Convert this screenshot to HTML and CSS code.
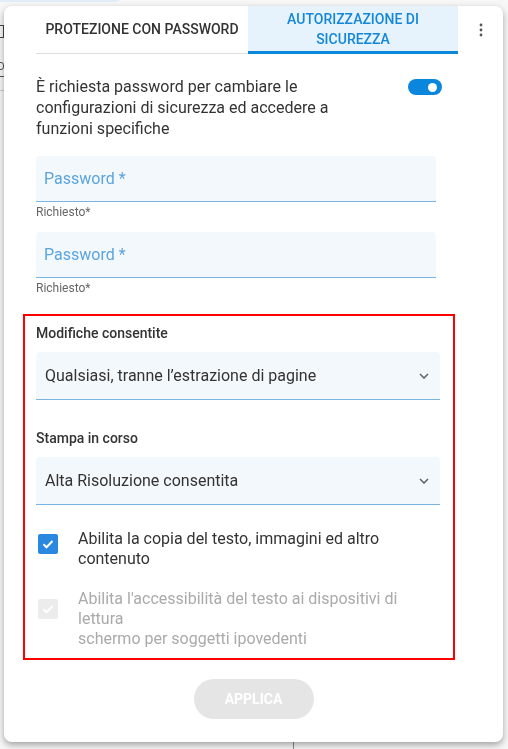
FILE: index.html
```html
<!DOCTYPE html>
<html lang="it">
  <head>
    <meta charset="UTF-8" />
    <meta name="viewport" content="width=device-width, initial-scale=1.0" />
    <title>Autorizzazione di sicurezza</title>
    <link rel="stylesheet" href="styles.css">
  </head>
  <body>
    <!-- page behind the dialog -->
    <div class="backdrop">
      <div class="bg-pill"></div>
      <div class="bg-icon"></div>
      <div class="bg-mark"></div>
      <div class="bg-rule"></div>
      <div class="bg-rule light"></div>
      <div class="bg-split"></div>
    </div>

    <div class="dialog">
      <div class="dialog-header">
        <div class="tabs">
          <div class="tab">Protezione con password</div>
          <div class="tab active">Autorizzazione di sicurezza</div>
        </div>
        <button class="menu-btn" aria-label="Menu">
          <svg width="4" height="14" viewBox="0 0 4 14">
            <circle cx="2" cy="2" r="1.4" fill="#555" />
            <circle cx="2" cy="7" r="1.4" fill="#555" />
            <circle cx="2" cy="12" r="1.4" fill="#555" />
          </svg>
        </button>
      </div>

      <div class="dialog-body">
        <div class="toggle-row">
          <p class="intro">
            È richiesta password per cambiare le configurazioni di sicurezza ed
            accedere a funzioni specifiche
          </p>
          <div class="toggle on"><span class="knob"></span></div>
        </div>

        <div class="field">
          <div class="input-box"><span class="input-label">Password *</span></div>
          <div class="helper">Richiesto*</div>
        </div>
        <div class="field">
          <div class="input-box"><span class="input-label">Password *</span></div>
          <div class="helper">Richiesto*</div>
        </div>

        <div class="permissions">
          <div class="group-title">Modifiche consentite</div>
          <div class="select-box">
            <span>Qualsiasi, tranne l’estrazione di pagine</span>
            <svg class="chevron" width="10" height="6" viewBox="0 0 10 6">
              <path d="M1 1l4 4 4-4" fill="none" stroke="#666" stroke-width="1.6" />
            </svg>
          </div>

          <div class="group-title spaced">Stampa in corso</div>
          <div class="select-box">
            <span>Alta Risoluzione consentita</span>
            <svg class="chevron" width="10" height="6" viewBox="0 0 10 6">
              <path d="M1 1l4 4 4-4" fill="none" stroke="#666" stroke-width="1.6" />
            </svg>
          </div>

          <label class="check-row">
            <span class="checkbox checked">
              <svg width="20" height="20" viewBox="0 0 20 20">
                <path d="M5.5 10.2l3 3 6-6.2" fill="none" stroke="#fff" stroke-width="2" />
              </svg>
            </span>
            <span class="check-text">Abilita la copia del testo, immagini ed altro contenuto</span>
          </label>

          <label class="check-row disabled">
            <span class="checkbox">
              <svg width="20" height="20" viewBox="0 0 20 20">
                <path d="M5.5 10.2l3 3 6-6.2" fill="none" stroke="#fff" stroke-width="2" />
              </svg>
            </span>
            <span class="check-text">Abilita l'accessibilità del testo ai dispositivi di lettura<br />schermo per soggetti ipovedenti</span>
          </label>
        </div>

        <div class="actions">
          <button class="apply-btn" disabled>Applica</button>
        </div>
      </div>
    </div>
  </body>
</html>
```

FILE: styles.css
```css
body {
  font-family: Roboto, "Noto Sans", sans-serif;
  background-color: #f7f7f7;
  color: #333;
  margin: 0;
  padding: 0;
  height: 749px;
  overflow: hidden;
}

/* Page behind the dialog */
.backdrop {
  position: relative;
  height: 749px;
}

.bg-pill {
  position: absolute;
  left: -10px;
  top: -20px;
  width: 135px;
  height: 22px;
  border-radius: 11px;
  background-color: #e2ecf8;
}

.bg-icon {
  position: absolute;
  left: -8px;
  top: 25px;
  width: 10px;
  height: 11px;
  border: 1.5px solid #444;
}

.bg-mark {
  position: absolute;
  left: -3px;
  top: 62px;
  width: 5px;
  height: 6px;
  border: 1.5px solid #555;
  border-radius: 3px;
}

.bg-rule {
  position: absolute;
  left: 0;
  top: 76px;
  width: 6px;
  height: 1px;
  background-color: #555;
}

.bg-rule.light {
  top: 90px;
  background-color: #ccc;
}

.bg-split {
  position: absolute;
  left: 293px;
  top: 730px;
  width: 1px;
  height: 20px;
  background-color: #888;
}

/* Dialog */
.dialog {
  position: fixed;
  left: 4px;
  top: 6px;
  width: 499px;
  height: 736px;
  background-color: #fff;
  border-radius: 8px;
  box-shadow: 0 3px 7px rgba(0, 0, 0, 0.35);
  box-sizing: border-box;
}

.dialog-header {
  display: flex;
  padding-left: 32px;
}

.tabs {
  display: flex;
  width: 422px;
  height: 48px;
  box-shadow: inset 0 -1px 0 #dedede;
}

.tab {
  box-sizing: border-box;
  display: flex;
  align-items: center;
  justify-content: center;
  text-align: center;
  text-transform: uppercase;
  font-size: 14px;
  font-weight: 500;
  line-height: 20px;
  color: #333;
  border-bottom: 3px solid transparent;
}

.tab:first-child {
  width: 212px;
}

.tab.active {
  width: 210px;
  padding: 0 28px;
  background-color: #e6f3fd;
  color: #1487d9;
  border-bottom-color: #0c87d9;
}

.menu-btn {
  flex: 1;
  height: 48px;
  background: transparent;
  border: none;
  padding: 0;
  display: flex;
  align-items: center;
  justify-content: center;
  cursor: pointer;
}

.dialog-body {
  padding: 22px 0 0 32px;
  width: 406px;
}

.toggle-row {
  display: flex;
  justify-content: space-between;
  align-items: flex-start;
}

.intro {
  margin: 0;
  width: 320px;
  font-size: 16px;
  line-height: 21px;
  color: #333;
}

.toggle {
  width: 34px;
  height: 16px;
  border-radius: 8px;
  background-color: #0a87dc;
  margin-top: 3px;
  display: flex;
  align-items: center;
  justify-content: flex-end;
  padding: 0 5px;
  box-sizing: border-box;
}

.knob {
  width: 9px;
  height: 9px;
  border-radius: 50%;
  background-color: #fff;
}

.field {
  width: 400px;
  margin-top: 17px;
}

.field + .field {
  margin-top: 12px;
}

.input-box {
  height: 46px;
  box-sizing: border-box;
  background-color: #f3f8fd;
  border-radius: 4px 4px 0 0;
  border-bottom: 1px solid #79b5e2;
  padding-left: 8px;
  display: flex;
  align-items: center;
}

.input-label {
  font-size: 16px;
  color: #5ba4dd;
}

.helper {
  font-size: 12px;
  line-height: 16px;
  margin-top: 2px;
  color: #666;
}

/* Highlighted permissions block */
.permissions {
  margin: 18px 0 0 -13px;
  width: 432px;
  box-sizing: border-box;
  border: 2px solid #ff0000;
  padding: 7px 13px 9px 11px;
}

.group-title {
  font-size: 14px;
  font-weight: 500;
  line-height: 20px;
  color: #333;
}

.group-title.spaced {
  margin-top: 28px;
}

.select-box {
  margin-top: 9px;
  height: 48px;
  box-sizing: border-box;
  background-color: #f3f8fd;
  border-radius: 4px 4px 0 0;
  border-bottom: 1px solid #79b5e2;
  padding: 0 11px 0 9px;
  display: flex;
  align-items: center;
  justify-content: space-between;
  font-size: 16px;
  color: #333;
}

.chevron {
  margin-top: 1px;
}

.check-row {
  display: flex;
  align-items: flex-start;
  gap: 20px;
  margin-top: 24px;
  padding-left: 2px;
  font-size: 16px;
  line-height: 20px;
  color: #333;
}

.check-row + .check-row {
  margin-top: 20px;
}

.checkbox {
  flex: none;
  width: 20px;
  height: 20px;
  border-radius: 2px;
  background-color: #ececec;
  margin-top: 10px;
}

.checkbox.checked {
  background-color: #2a88e0;
  margin-top: 5px;
}

.checkbox svg {
  display: block;
}

.check-text {
  max-width: 340px;
}

.check-row.disabled {
  color: #aaa;
}

.actions {
  display: flex;
  justify-content: center;
  margin: 19px 0 0 -32px;
  width: 499px;
}

.apply-btn {
  width: 120px;
  height: 40px;
  border-radius: 20px;
  border: none;
  background-color: #e5e5e5;
  color: #fff;
  font-family: inherit;
  font-size: 14px;
  font-weight: 700;
  text-transform: uppercase;
}
```
